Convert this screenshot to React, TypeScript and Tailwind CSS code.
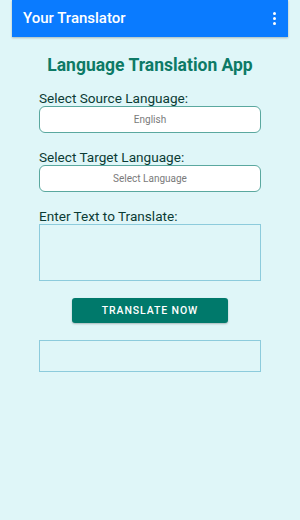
import { JSX } from "react"

export default function App(): JSX.Element {
  return (
    <div className="w-[300px] h-[520px] bg-[#dff6f8] font-['Roboto',sans-serif] overflow-hidden">
      <header className="mx-3 h-[37px] bg-[#0a7bff] flex items-center justify-between pl-[11px] pr-[12px] shadow-[0_1px_2px_rgba(0,0,0,0.25)]">
        <span className="text-white text-[15px] font-medium">Your Translator</span>
        <span className="flex flex-col gap-[2px]">
          <span className="w-[3px] h-[3px] bg-white rounded-full"></span>
          <span className="w-[3px] h-[3px] bg-white rounded-full"></span>
          <span className="w-[3px] h-[3px] bg-white rounded-full"></span>
        </span>
      </header>

      <h1 className="mt-[17px] text-center text-[17.5px] leading-[22px] font-bold text-[#0d7a66]">
        Language Translation App
      </h1>

      <div className="mt-[14px] px-[39px] flex flex-col">
        <label className="text-[13.6px] leading-[16px] text-[#0b3b34]">Select Source Language:</label>
        <div className="h-[27px] bg-white border border-[#5aa89f] rounded-[6px] flex items-center justify-center text-[10px] text-[#7a7a7a]">
          English
        </div>

        <label className="mt-[16px] text-[13.6px] leading-[16px] text-[#0b3b34]">Select Target Language:</label>
        <div className="h-[27px] bg-white border border-[#5aa89f] rounded-[6px] flex items-center justify-center text-[10px] text-[#7a7a7a]">
          Select Language
        </div>

        <label className="mt-[16px] text-[13.6px] leading-[16px] text-[#0b3b34]">Enter Text to Translate:</label>
        <div className="h-[57px] border border-[#8ccbdc]"></div>

        <div className="mt-[17px] flex justify-center">
          <button className="w-[156px] h-[25px] bg-[#00796b] rounded-[3px] text-white text-[10.5px] font-medium tracking-[0.9px] shadow-[0_1px_2px_rgba(0,0,0,0.25)]">
            TRANSLATE NOW
          </button>
        </div>

        <div className="mt-[17px] h-[32px] border border-[#8ccbdc]"></div>
      </div>
    </div>
  )
}
